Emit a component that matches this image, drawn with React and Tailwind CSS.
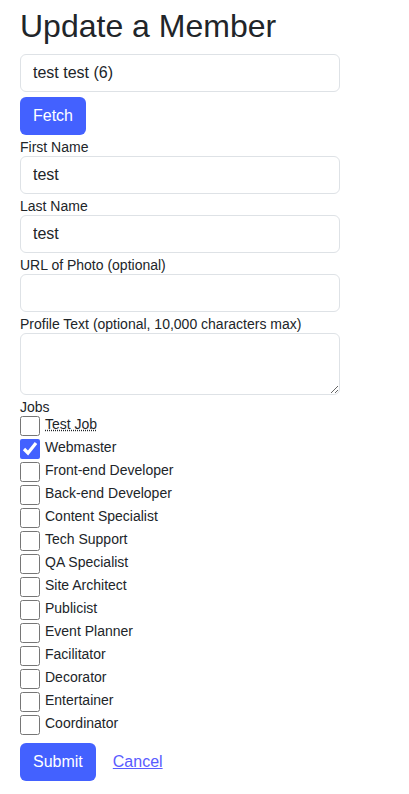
import React from "react";

const jobs = [
  "Test Job",
  "Webmaster",
  "Front-end Developer",
  "Back-end Developer",
  "Content Specialist",
  "Tech Support",
  "QA Specialist",
  "Site Architect",
  "Publicist",
  "Event Planner",
  "Facilitator",
  "Decorator",
  "Entertainer",
  "Coordinator",
];

function Field({ label, value, textarea }) {
  return (
    <div className="flex flex-col">
      <label className="mt-[5px] text-[14px] leading-[15px] mb-px text-[#212529]">{label}</label>
      {textarea ? (
        <textarea
          className="w-[320px] h-[62px] rounded-md border border-[#dee2e6] px-3 py-[6px] text-[16px] outline-none"
          defaultValue={value}
        />
      ) : (
        <input
          className="w-[320px] h-[38px] rounded-md border border-[#dee2e6] px-3 text-[16px] text-[#212529] outline-none"
          defaultValue={value}
        />
      )}
    </div>
  );
}

export default function App() {
  return (
    <div
      className="bg-white min-h-[794px] pl-5 pt-[7px] text-[#212529]"
      style={{ fontFamily: '"Liberation Sans", Arial, sans-serif' }}
    >
      <h1 className="text-[32px] leading-[38px] font-normal text-[#212529]">Update a Member</h1>
      <input
        className="mt-[9px] w-[320px] h-[38px] rounded-md border border-[#dee2e6] px-3 text-[16px] text-[#212529] outline-none block"
        defaultValue="test test (6)"
      />
      <button className="mt-[5px] h-[38px] px-[13px] rounded-md bg-[#4361ff] text-white text-[16px] block">
        Fetch
      </button>
      <Field label="First Name" value="test" />
      <Field label="Last Name" value="test" />
      <Field label="URL of Photo (optional)" value="" />
      <Field label="Profile Text (optional, 10,000 characters max)" value="" textarea />
      <div className="mt-[5px] text-[14px] leading-[15px] mb-px">Jobs</div>
      <div className="flex flex-col gap-[3px]">
        {jobs.map((j) => (
          <label key={j} className="flex items-center gap-[5px] h-5 text-[14px]">
            <input
              type="checkbox"
              defaultChecked={j === "Webmaster"}
              className="m-0 w-5 h-5 accent-[#4361ff]"
            />
            {j === "Test Job" ? (
              <abbr title="Test Job" className="underline decoration-dotted leading-[16px] mb-[4px]">
                {j}
              </abbr>
            ) : (
              <span className="leading-[16px] mb-[4px]">{j}</span>
            )}
          </label>
        ))}
      </div>
      <div className="mt-2 flex items-center gap-[17px]">
        <button className="h-[38px] px-[13px] rounded-md bg-[#4361ff] text-white text-[16px]">
          Submit
        </button>
        <a href="#" className="text-[16px] text-[#5a5cff] underline">
          Cancel
        </a>
      </div>
    </div>
  );
}
